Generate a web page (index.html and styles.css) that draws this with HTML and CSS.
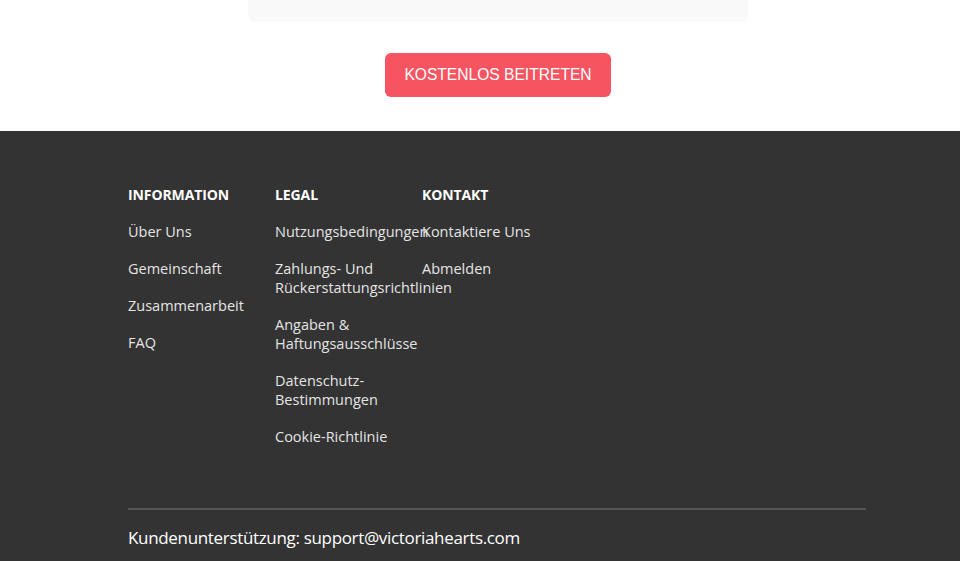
FILE: index.html
```html
<!DOCTYPE html>
<html lang="de">
<head>
<meta charset="utf-8">
<link rel="stylesheet" href="styles.css">
</head>
<body>
<section class="top">
  <div class="card"></div>
  <a class="cta" href="#">KOSTENLOS BEITRETEN</a>
</section>
<footer class="footer">
  <div class="inner">
    <div class="cols">
      <div class="col">
        <h4>INFORMATION</h4>
        <ul>
          <li>Über Uns</li>
          <li>Gemeinschaft</li>
          <li>Zusammenarbeit</li>
          <li>FAQ</li>
        </ul>
      </div>
      <div class="col">
        <h4>LEGAL</h4>
        <ul>
          <li>Nutzungsbedingungen</li>
          <li>Zahlungs- Und Rückerstattungsrichtlinien</li>
          <li>Angaben &amp; Haftungsausschlüsse</li>
          <li>Datenschutz-Bestimmungen</li>
          <li>Cookie-Richtlinie</li>
        </ul>
      </div>
      <div class="col">
        <h4>KONTAKT</h4>
        <ul>
          <li>Kontaktiere Uns</li>
          <li>Abmelden</li>
        </ul>
      </div>
    </div>
    <div class="rule"></div>
    <p class="support">Kundenunterstützung: support@victoriahearts.com</p>
  </div>
</footer>
</body>
</html>
```
FILE: styles.css
```css
html, body {
  margin: 0;
  padding: 0;
  background: #fff;
}
body {
  font-family: "Open Sans", sans-serif;
  overflow: hidden;
}
.top {
  display: flex;
  flex-direction: column;
  align-items: center;
  padding-left: 36px;
  padding-bottom: 34px;
}
.card {
  width: 500px;
  height: 22px;
  background: #f9f9f9;
  border-radius: 0 0 8px 8px;
}
.cta {
  margin-top: 31px;
  width: 226px;
  height: 44px;
  box-sizing: border-box;
  display: flex;
  align-items: center;
  justify-content: center;
  background: #f65461;
  color: #fff;
  border-radius: 6px;
  text-decoration: none;
  font-family: "Liberation Sans", Arial, sans-serif;
  font-size: 15.6px;
  padding-bottom: 1px;
}
.footer {
  background: #333333;
  padding-top: 54px;
  height: 430px;
  box-sizing: border-box;
}
.inner {
  width: 738px;
  margin-left: 128px;
}
.cols {
  display: flex;
}
.col {
  width: 147px;
  flex: none;
}
.col h4 {
  margin: 0;
  font-size: 14px;
  font-weight: 700;
  line-height: 20px;
  color: #fff;
  letter-spacing: -0.1px;
}
.col ul {
  list-style: none;
  margin: 17px 0 0;
  padding: 0;
}
.col li {
  font-size: 14.5px;
  line-height: 19px;
  color: #e4e4e4;
  margin-bottom: 18px;
}
.col:nth-child(2) li:first-child,
.col:nth-child(3) li {
  white-space: nowrap;
}
.rule {
  height: 2px;
  background: #555;
  margin-top: 44px;
}
.support {
  margin: 17px 0 0;
  font-size: 17px;
  line-height: 22px;
  color: #fff;
  letter-spacing: -0.33px;
}
```
